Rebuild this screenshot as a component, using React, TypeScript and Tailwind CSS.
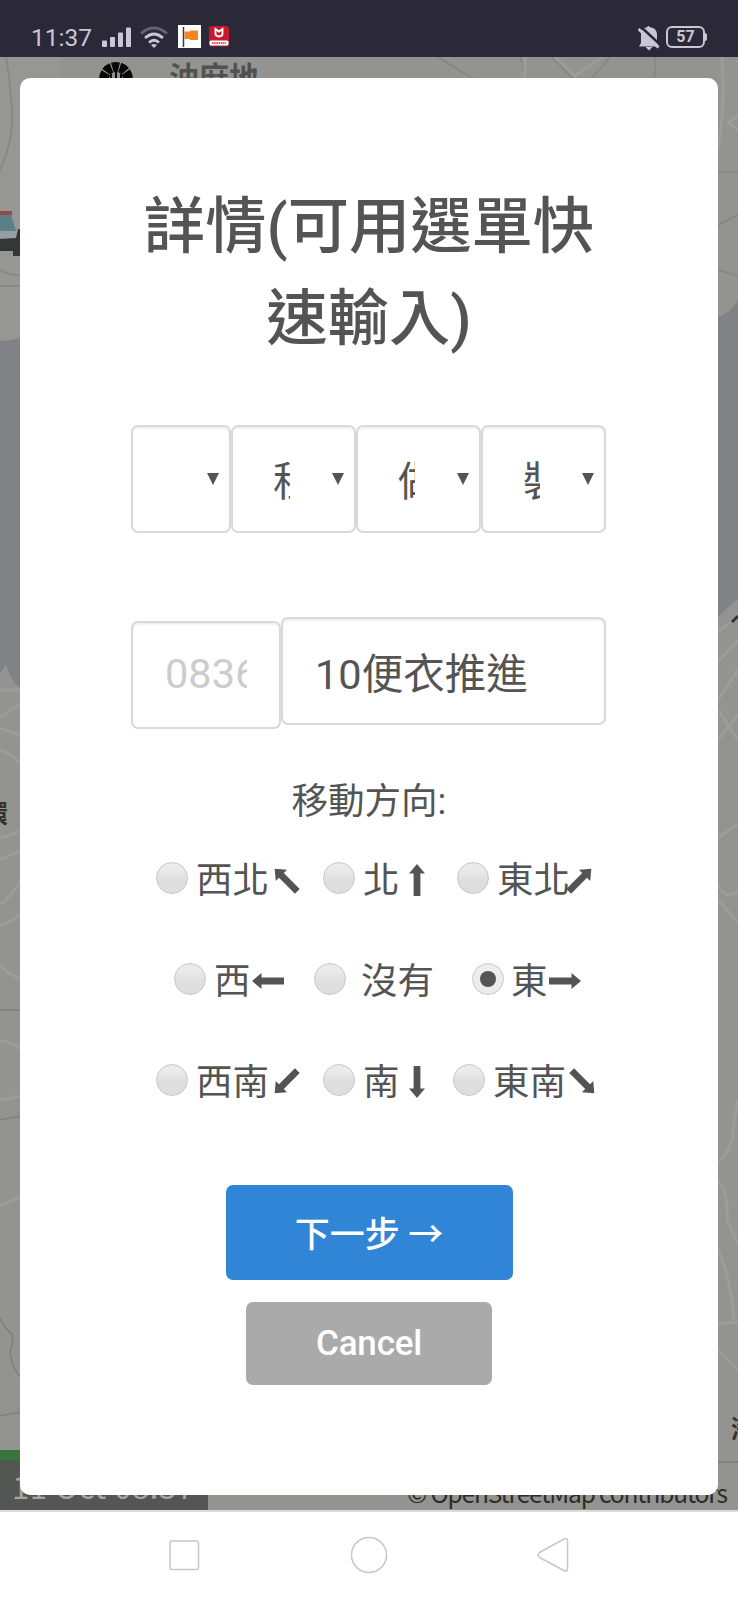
import { useState } from "react";

type Direction = {
  id: string;
  label: string;
  angle?: number;
  item: string;
  text: string;
  arrow?: string;
};

// angle is clockwise from "up"
const rows: { offset: string; items: Direction[] }[] = [
  {
    offset: "pl-[136px]",
    items: [
      { id: "nw", label: "西北", angle: -45, item: "w-[167px]", text: "ml-[8px]", arrow: "ml-0" },
      { id: "n", label: "北", angle: 0, item: "w-[134px]", text: "ml-[8px]", arrow: "ml-0" },
      { id: "ne", label: "東北", angle: 45, item: "w-[150px]", text: "ml-[8px]", arrow: "-ml-[7px]" },
    ],
  },
  {
    offset: "pl-[154px]",
    items: [
      { id: "w", label: "西", angle: -90, item: "w-[140px]", text: "ml-[8px]", arrow: "ml-0" },
      { id: "none", label: "沒有", item: "w-[158px]", text: "ml-[15px]" },
      { id: "e", label: "東", angle: 90, item: "w-[150px]", text: "ml-[7px]", arrow: "ml-0" },
    ],
  },
  {
    offset: "pl-[136px]",
    items: [
      { id: "sw", label: "西南", angle: -135, item: "w-[167px]", text: "ml-[8px]", arrow: "ml-0" },
      { id: "s", label: "南", angle: 180, item: "w-[130px]", text: "ml-[8px]", arrow: "ml-0" },
      { id: "se", label: "東南", angle: 135, item: "w-[150px]", text: "ml-[8px]", arrow: "ml-0" },
    ],
  },
];

const selects = [
  { id: "count", value: "", width: "w-[100px]" },
  { id: "kind", value: "程", width: "w-[125px]" },
  { id: "action", value: "做", width: "w-[125px]" },
  { id: "gear", value: "裝", width: "w-[125px]" },
];

function Arrow({ angle, className }: { angle: number; className?: string }) {
  return (
    <svg width="34" height="34" viewBox="-17 -17 34 34" className={`shrink-0 ${className ?? ""}`} aria-hidden>
      <path d="M0 -16 L8 -6.500 H3.400 V16 H-3.400 V-6.500 H-8 Z" fill="#545454" transform={`rotate(${angle})`} />
    </svg>
  );
}

function StatusBar() {
  return (
    <header className="flex h-[57px] items-start bg-[#2b2938] pl-[31px] pr-[31px] pt-[24px] text-[#c9c7d6]">
      <span className="text-[24.5px] leading-[28px]">11:37</span>
      <svg width="32" height="22" viewBox="0 0 32 22" className="ml-[9px] mt-[2px]" fill="currentColor">
        <rect x="1" y="14.500" width="5" height="6.500" rx="1" />
        <rect x="9" y="11" width="5" height="10" rx="1" />
        <rect x="17" y="6.500" width="5" height="14.500" rx="1" />
        <rect x="25" y="1.500" width="5" height="19.500" rx="1" />
      </svg>
      <svg width="28" height="24" viewBox="0 0 28 24" className="ml-[7px] mt-[2px]" fill="none" strokeWidth="2.800">
        <path d="M1 7.500 Q14 -3.500 27 7.500" stroke="#65637a" />
        <path d="M5 12 Q14 4 23 12" stroke="currentColor" />
        <path d="M9 16.500 Q14 12 19 16.500" stroke="currentColor" />
        <path d="M11 19 Q14 17 17 19 L14 22 Z" fill="currentColor" />
      </svg>
      <svg width="23" height="24" viewBox="0 0 23 24" className="ml-[10px] mt-px">
        <rect width="23" height="23" fill="#fff" />
        <path d="M5.500 2 V22" stroke="#3b3552" strokeWidth="1.500" />
        <path d="M6.500 6.500 H12 V5.500 H20 V15 H12 V14 H6.500 Z" fill="#f5861f" />
      </svg>
      <svg width="20" height="22" viewBox="0 0 20 22" className="ml-[8px] mt-[2px]">
        <rect width="20" height="20.500" rx="3" fill="#c8192e" />
        <path d="M6.500 3 V8 Q6.500 10 10 10.500 Q13.500 10 13.500 8 V3 L10 5.500 Z" fill="none" stroke="#fff" strokeWidth="1.900" />
        <rect x="0.500" y="14.500" width="19" height="5" rx="1.500" fill="#fff" />
        <path d="M3 17 H17" stroke="#c8192e" strokeWidth="1.500" strokeDasharray="1.500 0.700" />
      </svg>
      <svg width="22" height="26" viewBox="0 0 22 26" className="ml-auto mt-px" fill="currentColor">
        <path d="M3 18 V10 Q3 3 9 2.200 Q10.500 0 12 2.200 Q19 3 19 10 V18 L21 21.500 H1 Z" />
        <path d="M7.500 22 H14.500 L11 25.500 Z" />
        <path d="M2 1 L22 19.500" stroke="#2b2938" strokeWidth="2.500" />
        <path d="M0.500 4 L20.500 22.500" stroke="currentColor" strokeWidth="3" />
      </svg>
      <div className="ml-[6px] mt-[2px] flex items-center">
        <div className="flex h-[22px] w-[39px] items-center justify-center rounded-[6px] border-2 border-current text-[16px] font-bold leading-none">
          57
        </div>
        <div className="h-2 w-[2px] rounded-r bg-current" />
      </div>
    </header>
  );
}

function MapBackdrop() {
  return (
    <svg className="absolute inset-0" width="738" height="1453" viewBox="0 57 738 1453" aria-hidden>
      <rect y="57" width="738" height="1453" fill="#939490" />
      <path d="M0 57 H60 V345 H0 Z" fill="#969693" />
      <path d="M0 341 Q12 340 21 338 H60 V690 L21 688 Q12 684 6 664 L0 674 Z" fill="#808286" />
      <path d="M700 322 Q728 318 738 300 V598 L718 617 L700 630 Z" fill="#808286" />
      <g fill="none" stroke="#858682" strokeWidth="1.500">
        <path d="M0 170 Q14 140 12 110 Q10 80 6 57" />
        <path d="M0 286 H21 M0 270 Q10 276 21 275" />
        <path d="M438 57 L472 78 M520 57 L527 78 M552 57 L572 78 M610 57 L592 78 M655 57 V78" />
        <path d="M718 172 H738 M718 225 L738 215 M718 270 L738 276" />
      </g>
      <g fill="none" stroke="#9c9d9a" strokeWidth="3">
        <path d="M555 57 L575 76 L602 57 M525 57 V80" />
        <path d="M0 690 H21 M0 718 Q12 708 21 704 M0 728 L21 736 M0 750 Q10 752 21 764" />
        <path d="M0 838 Q10 836 21 830 M0 860 L21 850 M0 905 Q15 892 21 880" />
        <path d="M0 925 Q12 922 21 914 M0 965 Q10 976 21 978" />
        <path d="M0 1040 Q12 1042 21 1050 M0 1100 L21 1096 M0 1205 Q15 1200 21 1196" />
        <path d="M722 57 Q725 110 718 150 M738 116 L728 122 L738 130" />
        <path d="M718 632 L738 615 M718 662 L738 640 M718 700 L738 670 M718 710 L738 740 M718 740 L738 715" />
        <path d="M718 838 L738 824 M718 885 Q724 900 738 892 M718 900 L738 922" />
        <path d="M718 1162 Q734 1150 734 1120 L738 1100 M718 1181 Q728 1190 727 1220 L738 1245" />
        <path d="M718 1250 Q730 1275 734 1320 M718 1324 L738 1322 M718 1350 L738 1370" />
      </g>
      <g fill="none" stroke="#7d7e7b" strokeWidth="1.500">
        <path d="M0 1318 Q4 1328 12 1334 Q14 1340 10 1352 Q12 1368 21 1378" />
        <path d="M0 1010 H21 M0 1120 L21 1116 M718 1462 H738 M0 1416 L21 1412" />
      </g>
      {/* police car marker */}
      <rect y="211" width="12" height="4" fill="#94494a" />
      <path d="M0 215 H11 L16 231 H0 Z" fill="#5b7f84" />
      <path d="M0 231 H18 V238 H0 Z" fill="#96a0a3" />
      <path d="M0 239 L16 238 L18 229 H21 V256 H13 V251 H0 Z" fill="#353736" />
      {/* umbrella station marker */}
      <circle cx="116" cy="79" r="12" fill="none" stroke="#080808" strokeWidth="10" strokeDasharray="6.500 1" />
      <path d="M111 74 V84 M116 72 V84 M121 74 V84" stroke="#080808" strokeWidth="2" />
      <g className="font-['Noto_Sans_CJK_TC',sans-serif]" fontWeight="700" fill="#333">
        <text x="169" y="88" fontSize="30" fill="#50524f">油麻地</text>
        <text x="-17" y="823" fontSize="25">環</text>
        <text x="731" y="1438" fontSize="25">灣</text>
      </g>
      <path d="M732 622 L738 616" stroke="#333" strokeWidth="3" />
      <rect y="1450" width="208" height="10" fill="#3c7440" />
      <rect y="1460" width="208" height="50" fill="#545653" />
      <text x="12" y="1499" fontSize="31" fill="#a5a6a4" className="font-['Noto_Sans_CJK_TC',sans-serif]" textLength="182">
        11 Oct 08:37
      </text>
      <text x="407" y="1503" fontSize="24.500" fill="#2b2c2a" className="font-['Noto_Sans_CJK_TC',sans-serif]" textLength="321">
        © OpenStreetMap contributors
      </text>
    </svg>
  );
}

export default function App() {
  const [direction, setDirection] = useState("e");
  const [details, setDetails] = useState("10便衣推進");

  return (
    <div className="flex h-[1600px] w-[738px] flex-col overflow-hidden bg-white font-['Roboto','Noto_Sans_CJK_TC',sans-serif] text-[#545454]">
      <StatusBar />

      <main className="relative h-[1453px] overflow-hidden px-5 pt-[21px]">
        <MapBackdrop />

        <div role="dialog" className="relative flex h-[1417px] w-[698px] flex-col items-center rounded-[10px] bg-white pt-[104px]">
          <h2 className="text-center text-[61.3px] font-medium leading-[91.500px]">
            詳情(可用選單快
            <br />
            速輸入)
          </h2>

          <div className="mt-[60px] flex w-[476px]">
            {selects.map((s) => (
              <button
                key={s.id}
                type="button"
                className={`flex h-[108px] items-center justify-between rounded-[7px] border-2 border-[#d9d9d9] pl-[40px] pr-[10px] shadow-[inset_0_2px_2px_rgba(0,0,0,0.06)] ${s.width}`}
              >
                <span className="mt-[5px] w-[17px] overflow-hidden whitespace-nowrap text-left text-[41px] leading-[60px]">{s.value}</span>
                <svg width="12" height="12" viewBox="0 0 12 12" className="mb-px shrink-0" aria-hidden>
                  <path d="M0 0 H12 L6 12 Z" fill="#545454" />
                </svg>
              </button>
            ))}
          </div>

          <div className="mt-[84px] flex w-[476px] items-start">
            <input
              type="text"
              placeholder="0836"
              className="mt-1 h-[108px] w-[150px] rounded-[7px] border-2 border-[#d9d9d9] px-[32px] pb-[3px] text-[41.500px] shadow-[inset_0_2px_2px_rgba(0,0,0,0.06)] outline-none placeholder:text-[#ccc]"
            />
            <input
              type="text"
              value={details}
              onChange={(e) => setDetails(e.target.value)}
              className="h-[108px] w-[325px] rounded-[7px] border-2 border-[#d9d9d9] px-[32px] text-[41.500px] shadow-[inset_0_2px_2px_rgba(0,0,0,0.06)] outline-none"
            />
          </div>

          <p className="mt-[46px] text-[36.500px] leading-[54px]">移動方向:</p>

          <div className="w-full">
            {rows.map((row, i) => (
              <div key={i} className={`flex h-[101px] items-center ${row.offset}`}>
                {row.items.map((d) => (
                  <label key={d.id} className={`flex shrink-0 items-center ${d.item}`}>
                    <input
                      type="radio"
                      name="direction"
                      checked={direction === d.id}
                      onChange={() => setDirection(d.id)}
                      className="mb-[3px] flex h-8 w-8 shrink-0 appearance-none items-center justify-center rounded-full border border-[#c8c8c8] bg-gradient-to-b from-[#ebebeb] from-20% to-[#dedede] to-60% checked:from-[#ededed] checked:to-[#ebebeb] checked:before:h-4 checked:before:w-4 checked:before:rounded-full checked:before:bg-[#545454] checked:before:content-['']"
                    />
                    <span className={`mt-[3px] whitespace-nowrap text-[36.500px] leading-[52px] ${d.text}`}>{d.label}</span>
                    {d.angle !== undefined && <Arrow angle={d.angle} className={d.arrow} />}
                  </label>
                ))}
              </div>
            ))}
          </div>

          <button type="button" className="mt-[53px] h-[95px] w-[287px] rounded-[7px] bg-[#3085d6] pt-[8px] text-[35px] font-medium text-white">
            下一步 →
          </button>
          <button type="button" className="mt-[22px] h-[83px] w-[246px] rounded-[7px] bg-[#aaaaaa] pt-[2px] text-[35px] font-medium tracking-[-0.2px] text-white">
            Cancel
          </button>
        </div>
      </main>

      <nav className="flex h-[90px] items-center justify-center border-t-2 border-[#dcdcdc] bg-white">
        <svg width="400" height="40" viewBox="0 0 400 40" fill="none" stroke="#c8c8c8" strokeWidth="1.500" strokeLinejoin="round">
          <rect x="1" y="5" width="28.500" height="28.500" rx="2" />
          <circle cx="200" cy="19" r="17.500" />
          <path d="M370.500 16.500 L395 3 Q398.500 1.500 398.500 5.500 V32.500 Q398.500 36.500 395 34.500 L370.500 21.500 Q367.500 19 370.500 16.500 Z" />
        </svg>
      </nav>
    </div>
  );
}
